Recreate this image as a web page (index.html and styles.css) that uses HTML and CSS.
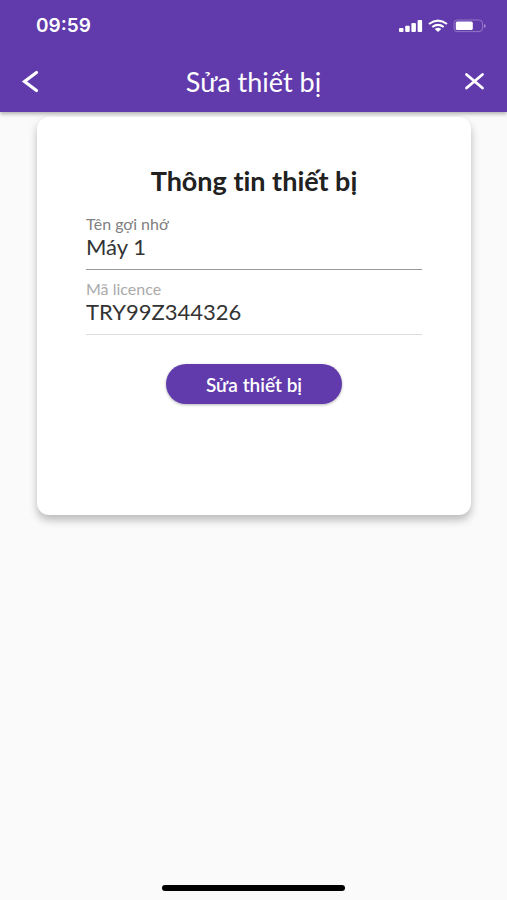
FILE: index.html
```html
<!DOCTYPE html>
<html lang="vi">
<head>
<meta charset="utf-8">
<meta name="viewport" content="width=device-width, initial-scale=1">
<title>Sửa thiết bị</title>
<link rel="stylesheet" href="styles.css">
</head>
<body>
<header class="top">
  <div class="status">
    <time class="clock">09:59</time>
    <div class="indicators">
      <svg width="24" height="14" viewBox="0 0 24 14" fill="currentColor" aria-hidden="true">
        <rect x="0" y="9" width="4.5" height="4" rx="1"/>
        <rect x="6.2" y="6.8" width="4.5" height="6.2" rx="1"/>
        <rect x="12.4" y="4" width="4.5" height="9" rx="1"/>
        <rect x="18.6" y="1" width="4.5" height="12" rx="1"/>
      </svg>
      <svg width="20" height="14" viewBox="0 0 20 14" fill="none" stroke="currentColor" stroke-width="2.1" aria-hidden="true">
        <path d="M1 5Q10-1.8 19 5"/>
        <path d="M4.3 8Q10 3.6 15.7 8"/>
        <path d="M6.7 10Q10 7.4 13.3 10L10 13Z" fill="currentColor" stroke="none"/>
      </svg>
      <svg width="33" height="14" viewBox="0 0 33 14" aria-hidden="true">
        <rect x="1" y="1" width="28.5" height="11.6" rx="3.4" fill="none" stroke="#fff" stroke-opacity=".3"/>
        <rect x="2.8" y="2.6" width="17" height="8.4" rx="1.6" fill="#fff"/>
        <path d="M31 5v4q1.8-.6 1.8-2T31 5Z" fill="#fff" fill-opacity=".4"/>
      </svg>
    </div>
  </div>
  <nav class="bar">
    <button class="icon" type="button" aria-label="Quay lại">
      <svg width="22" height="26" viewBox="0 0 22 26" fill="none" stroke="currentColor" stroke-width="3.2" stroke-linecap="round" aria-hidden="true"><path d="M15.5 3.500 3.500 12.500l12 9"/></svg>
    </button>
    <h1 class="title">Sửa thiết bị</h1>
    <button class="icon" type="button" aria-label="Đóng">
      <svg width="22" height="26" viewBox="0 0 22 26" fill="none" stroke="currentColor" stroke-width="2.8" stroke-linecap="round" aria-hidden="true"><path d="M2.500 5.500 18.500 19M18.500 5.500 2.500 19"/></svg>
    </button>
  </nav>
</header>
<main class="content">
  <form class="card">
    <h2 class="heading">Thông tin thiết bị</h2>
    <div class="field">
      <label for="name">Tên gợi nhớ</label>
      <input id="name" type="text" value="Máy 1">
    </div>
    <div class="field readonly">
      <label for="licence">Mã licence</label>
      <input id="licence" type="text" value="TRY99Z344326" readonly>
    </div>
    <button class="submit" type="button">Sửa thiết bị</button>
  </form>
</main>
<footer class="home"><div class="indicator"></div></footer>
</body>
</html>
```
FILE: styles.css
```css
* {
  box-sizing: border-box;
}

body {
  margin: 0;
  min-height: 100vh;
  display: flex;
  flex-direction: column;
  background: #fafafa;
  color: #212121;
  font-family: Lato, "Noto Sans", sans-serif;
  font-variant-ligatures: none;
}

button,
input {
  font: inherit;
}

.top {
  background: #613bac;
  color: #fff;
  box-shadow: 0 2px 4px rgba(0, 0, 0, .3);
}

.status {
  display: flex;
  align-items: center;
  justify-content: space-between;
  height: 52px;
  padding: 0 21px 0 36px;
}

.clock {
  font: 600 19px/20px Inter, sans-serif;
}

.indicators {
  display: flex;
  align-items: center;
  gap: 5px;
}

.bar {
  display: flex;
  align-items: center;
  justify-content: space-between;
  height: 60px;
  padding: 0 21px;
}

.icon {
  display: flex;
  padding: 0;
  border: 0;
  background: none;
  color: inherit;
}

.title {
  margin: 0;
  font-size: 27px;
  font-weight: 400;
  line-height: 32px;
}

.content {
  flex: 1;
  padding: 5px 36px 0 37px;
}

.card {
  display: flex;
  flex-direction: column;
  min-height: 398px;
  padding: 48px 49px;
  border-radius: 12px;
  background: #fff;
  box-shadow: 0 5px 8px rgba(0, 0, 0, .26);
}

.heading {
  margin: 0 0 18px;
  font-size: 27px;
  font-weight: 700;
  line-height: 32px;
  text-align: center;
}

.field {
  display: flex;
  flex-direction: column;
  margin-bottom: 10px;
  border-bottom: 1px solid #999;
}

.field label {
  color: #808080;
  font-size: 16px;
  line-height: 18px;
}

.field input {
  width: 100%;
  height: 26px;
  margin-bottom: 10px;
  padding: 0;
  border: 0;
  outline: 0;
  background: none;
  color: #333;
  font-size: 22px;
}

.readonly {
  border-color: #ddd;
}

.readonly label {
  color: #aaa;
}

.submit {
  align-self: center;
  height: 40px;
  margin-top: 19px;
  padding: 0 40px;
  border: 0;
  border-radius: 20px;
  background: #613bac;
  color: #fff;
  box-shadow: 0 1px 3px rgba(0, 0, 0, .3);
  font-size: 19px;
  font-weight: 600;
}

.home {
  display: flex;
  justify-content: center;
  padding-bottom: 9px;
}

.indicator {
  width: 36%;
  height: 6px;
  border-radius: 3px;
  background: #000;
}
```
